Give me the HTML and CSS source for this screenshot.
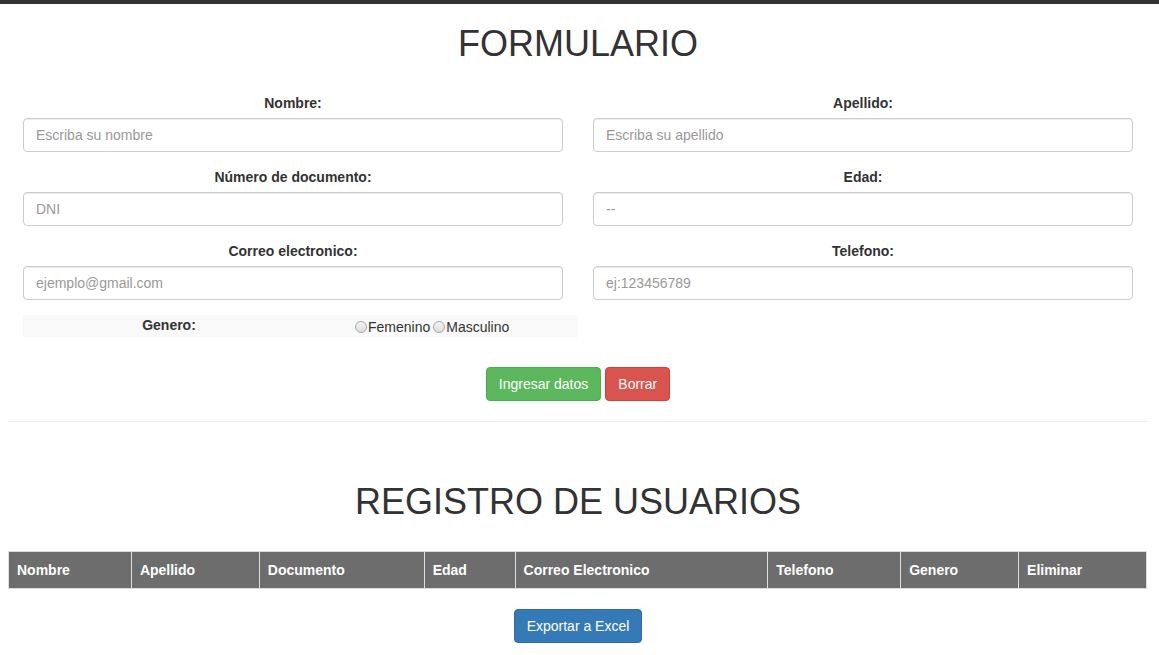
FILE: index.html
```html
<!DOCTYPE html>
<html lang="es">
<head>
<meta charset="utf-8">
<title>Formulario</title>
<link rel="stylesheet" href="styles.css">
</head>
<body>
<div class="topbar"></div>
<div class="container">
  <h1 class="title">FORMULARIO</h1>
  <form class="form">
    <div class="row">
      <div class="col">
        <div class="form-group">
          <label>Nombre:</label>
          <input type="text" placeholder="Escriba su nombre">
        </div>
        <div class="form-group">
          <label>Número de documento:</label>
          <input type="text" placeholder="DNI">
        </div>
        <div class="form-group">
          <label>Correo electronico:</label>
          <input type="text" placeholder="ejemplo@gmail.com">
        </div>
      </div>
      <div class="col">
        <div class="form-group">
          <label>Apellido:</label>
          <input type="text" placeholder="Escriba su apellido">
        </div>
        <div class="form-group">
          <label>Edad:</label>
          <input type="text" placeholder="--">
        </div>
        <div class="form-group">
          <label>Telefono:</label>
          <input type="text" placeholder="ej:123456789">
        </div>
      </div>
    </div>
    <div class="genero">
      <div class="genero-label">Genero:</div>
      <div class="genero-opts">
        <input type="radio" name="g" class="radio"><span>Femenino</span><input type="radio" name="g" class="radio"><span>Masculino</span>
      </div>
    </div>
    <div class="actions">
      <button type="button" class="btn btn-success">Ingresar datos</button>
      <button type="button" class="btn btn-danger">Borrar</button>
    </div>
  </form>
  <hr class="sep">
  <h1 class="title title-2">REGISTRO DE USUARIOS</h1>
  <table class="table">
    <thead>
      <tr>
        <th class="c1">Nombre</th>
        <th class="c2">Apellido</th>
        <th class="c3">Documento</th>
        <th class="c4">Edad</th>
        <th class="c5">Correo Electronico</th>
        <th class="c6">Telefono</th>
        <th class="c7">Genero</th>
        <th class="c8">Eliminar</th>
      </tr>
    </thead>
    <tbody></tbody>
  </table>
  <div class="export">
    <button type="button" class="btn btn-primary">Exportar a Excel</button>
  </div>
</div>
</body>
</html>
```

FILE: styles.css
```css
* { box-sizing: border-box; }
html, body {
  margin: 0;
  padding: 0;
  background: #fff;
  font-family: "Liberation Sans", Arial, Helvetica, sans-serif;
  font-size: 14px;
  line-height: 20px;
  color: #333;
}
.topbar {
  height: 4px;
  background: #333;
}
.container {
  width: 1140px;
  margin-left: 8px;
}
.title {
  margin: 20px 0 10px;
  font-size: 36px;
  font-weight: 500;
  line-height: 39.6px;
  text-align: center;
  color: #333;
}
.title-2 {
  margin-top: 60px;
  margin-bottom: 30px;
}
.form {
  padding-top: 19px;
}
.row {
  display: grid;
  grid-template-columns: 570px 570px;
}
.col {
  padding: 0 15px;
}
.form-group {
  margin-bottom: 15px;
}
.form-group label {
  display: block;
  text-align: center;
  font-weight: 700;
  margin-bottom: 5px;
  height: 20px;
}
.form-group input {
  display: block;
  width: 100%;
  height: 34px;
  padding: 6px 12px;
  font-family: inherit;
  font-size: 14px;
  color: #555;
  background: #fff;
  border: 1px solid #ccc;
  border-radius: 4px;
  box-shadow: inset 0 1px 1px rgba(0,0,0,.075);
  outline: none;
}
.form-group input::placeholder {
  color: #999;
}
.genero {
  margin-left: 15px;
  width: 555px;
  height: 22px;
  background: #f9f9f9;
  display: grid;
  grid-template-columns: 292px 1fr;
  align-items: center;
}
.genero-label {
  text-align: center;
  font-weight: 700;
  padding-bottom: 2px;
}
.genero-opts {
  display: flex;
  align-items: center;
  padding-left: 40px;
  padding-top: 2px;
}
.radio {
  appearance: none;
  -webkit-appearance: none;
  width: 12px;
  height: 12px;
  margin: 0 1px 0 0;
  border-radius: 50%;
  border: 1px solid #a8a8a8;
  background: linear-gradient(#f4f4f4, #dcdcdc);
}
.genero-opts span + .radio {
  margin-left: 3px;
}
.actions {
  display: flex;
  justify-content: center;
  gap: 4px;
  margin-top: 30px;
}
.btn {
  display: inline-block;
  height: 34px;
  padding: 6px 12px;
  font-family: inherit;
  font-size: 14px;
  line-height: 20px;
  color: #fff;
  border: 1px solid transparent;
  border-radius: 4px;
  cursor: pointer;
}
.btn-success {
  background: #5cb85c;
  border-color: #4cae4c;
}
.btn-danger {
  background: #d9534f;
  border-color: #d43f3a;
}
.btn-primary {
  background: #337ab7;
  border-color: #2e6da4;
}
.sep {
  margin: 20px 0 0;
  border: 0;
  border-top: 1px solid #eee;
}
.table {
  width: 1139px;
  border-collapse: collapse;
  margin: 0;
}
.table th {
  background: #6d6d6d;
  color: #fff;
  font-weight: 700;
  text-align: left;
  padding: 8px;
  line-height: 20px;
  border: 1px solid #ddd;
}
.c1 { width: 123px; }
.c2 { width: 128px; }
.c3 { width: 165px; }
.c4 { width: 91px; }
.c5 { width: 253px; }
.c6 { width: 133px; }
.c7 { width: 118px; }
.c8 { width: 128px; }
.export {
  display: flex;
  justify-content: center;
  margin-top: 20px;
}
```
